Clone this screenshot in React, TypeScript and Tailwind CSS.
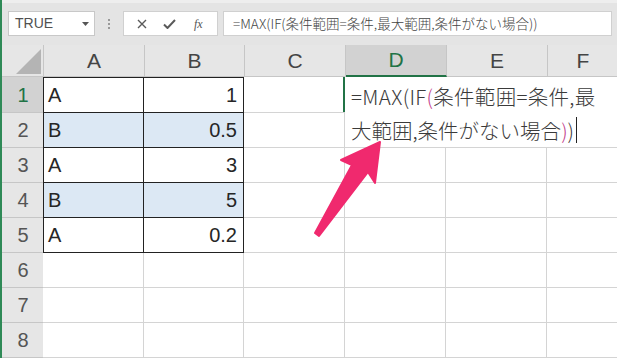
import React from 'react';

const cols = ['A', 'B', 'C', 'D', 'E', 'F'];
const widths = [101, 100, 101, 101, 101, 71];
const rowHeights = [36, 35, 35, 35, 35, 35, 35, 35];

const data: Record<string, string> = {
  A1: 'A', B1: '1',
  A2: 'B', B2: '0.5',
  A3: 'A', B3: '3',
  A4: 'B', B4: '5',
  A5: 'A', B5: '0.2',
};

const jp = '[font-family:"Noto_Sans_CJK_JP","Liberation_Sans",sans-serif]';
const latin = '[font-family:"Liberation_Sans","Noto_Sans_CJK_JP",sans-serif]';

function FormulaBar() {
  return (
    <div className="h-[45px] bg-[#e4e4e4] border-t-[3px] border-[#eeeeee] flex items-start pt-[8px] pl-[6px] pr-[5px]">
      <div className="w-[87px] h-[25px] bg-white border border-[#c8c8c8] flex items-center justify-between pl-[6px] pr-[5px]">
        <span className={`text-[14px] text-[#505050] ${latin}`}>TRUE</span>
        <svg width="7" height="4" viewBox="0 0 7 4"><path d="M0 0h7L3.5 4z" fill="#555" /></svg>
      </div>
      <div className="w-[28px] h-[25px] flex flex-col items-center justify-center gap-[2px]">
        <span className="w-[2px] h-[2px] bg-[#999]" />
        <span className="w-[2px] h-[2px] bg-[#999]" />
        <span className="w-[2px] h-[2px] bg-[#999]" />
      </div>
      <div className="w-[95px] h-[25px] bg-white border border-[#d0d0d0] flex items-center pl-[13px] gap-[16px]">
        <svg width="10" height="10" viewBox="0 0 10 10"><path d="M1 1l8 8M9 1l-8 8" stroke="#5a5a5a" strokeWidth="1.4" /></svg>
        <svg width="13" height="10" viewBox="0 0 13 10"><path d="M1 5.5l3.5 3.5L12 1" stroke="#5a5a5a" strokeWidth="2" fill="none" /></svg>
        <span className="text-[12px] italic text-[#555] [font-family:'Liberation_Serif',serif] leading-none ml-[2px]">fx</span>
      </div>
      <div className="ml-[5px] flex-1 h-[25px] bg-white border border-[#d0d0d0] flex items-center pl-[9px]">
        <span className={`text-[13.5px] font-light text-[#444] ${jp} whitespace-nowrap`}>=MAX(IF(条件範囲=条件,最大範囲,条件がない場合))</span>
      </div>
    </div>
  );
}

function Header() {
  return (
    <div className="flex h-[32px]">
      <div className="w-[42px] shrink-0 bg-[#e6e6e6] border-r border-b border-[#c6c6c6] flex items-end justify-end pr-[2px] pb-[2px]">
        <svg width="25" height="25" viewBox="0 0 25 25"><path d="M25 0v25H0z" fill="#b4b4b4" /></svg>
      </div>
      {cols.map((c, i) => {
        const active = c === 'D';
        return (
          <div
            key={c}
            style={{ width: widths[i] }}
            className={`shrink-0 flex items-center justify-center text-[21px] ${latin} border-r border-[#c6c6c6] ${
              active ? 'bg-[#d2d2d2] text-[#217346] border-b-2 border-b-[#217346]' : 'bg-[#e6e6e6] text-[#444] border-b border-b-[#c6c6c6]'
            }`}
          >
            {c}
          </div>
        );
      })}
    </div>
  );
}

function Row({ n, h }: { n: number; h: number }) {
  const activeRow = n === 1;
  return (
    <div className="flex" style={{ height: h }}>
      <div
        className={`w-[42px] shrink-0 flex items-center justify-center text-[20px] ${latin} border-b border-[#c6c6c6] ${
          activeRow ? 'bg-[#d2d2d2] text-[#217346]' : 'bg-[#e6e6e6] text-[#555]'
        }`}
      >
        {n}
      </div>
      {cols.map((c, i) => {
        const key = `${c}${n}`;
        const inData = (c === 'A' || c === 'B') && n <= 5;
        const shaded = inData && (n === 2 || n === 4);
        const editing = n <= 2 && (c === 'D' || c === 'E' || c === 'F');
        let cls = 'border-r border-b border-[#d4d4d4]';
        if (inData) cls = 'border-r border-b border-[#222]';
        if (c === 'A' && n <= 5) cls += ' border-l border-l-[#222]';
        if (n === 1 && inData) cls += ' border-t border-t-[#222]';
        if (editing) cls = n === 2 ? 'border-b border-[#d4d4d4]' : '';
        if (c === 'C' && n <= 2) cls = 'border-b border-[#d4d4d4]';
        return (
          <div
            key={key}
            style={{ width: widths[i] }}
            className={`shrink-0 relative flex items-center px-[4px] text-[20px] text-[#262626] ${latin} ${cls} ${
              shaded ? 'bg-[#dce8f4]' : 'bg-white'
            } ${c === 'B' ? 'justify-end pr-[6px]' : 'justify-start'} ${c === 'A' ? '-ml-px' : ''}`}
          >
            {data[key] ?? ''}
            {c === 'C' && n <= 2 && (
              <div className={`absolute right-0 top-0 h-full ${n === 1 ? 'bg-[#217346] w-[2px]' : 'bg-[#d4d4d4] w-px'}`} />
            )}
          </div>
        );
      })}
    </div>
  );
}

export default function App() {
  return (
    <div className="relative w-[617px] h-[358px] overflow-hidden bg-white border-l-2 border-[#2f8a57]">
      <FormulaBar />
      <Header />
      {rowHeights.map((h, i) => (
        <Row key={i} n={i + 1} h={h} />
      ))}

      {/* in-cell editor overflowing D1 */}
      <div className={`absolute left-[345px] top-[78px] w-[272px] h-[69px] bg-white pl-[4px] pt-[1px] text-[20.5px] font-light leading-[34px] text-[#3a3a3a] ${jp}`}>
        <div className="whitespace-nowrap tracking-[0.3px]">
          =MAX(IF<span className="text-[#c2408a]">(</span>条件範囲=条件,最
        </div>
        <div className="whitespace-nowrap flex items-center">
          <span>大範囲,条件がない場合<span className="text-[#c2408a]">)</span>)</span>
          <span className="inline-block w-px h-[26px] bg-[#222] ml-[2px]" />
        </div>
      </div>

      {/* pink arrow */}
      <svg className="absolute left-0 top-0 pointer-events-none" width="617" height="358" viewBox="0 0 617 358">
        <path
          d="M313 233 L350 165 L339 160 L378 142 L373 183 L366 172 L317 236 Z"
          fill="#f0296e"
          stroke="#f0296e"
          strokeWidth="2"
          strokeLinejoin="round"
        />
      </svg>
    </div>
  );
}
